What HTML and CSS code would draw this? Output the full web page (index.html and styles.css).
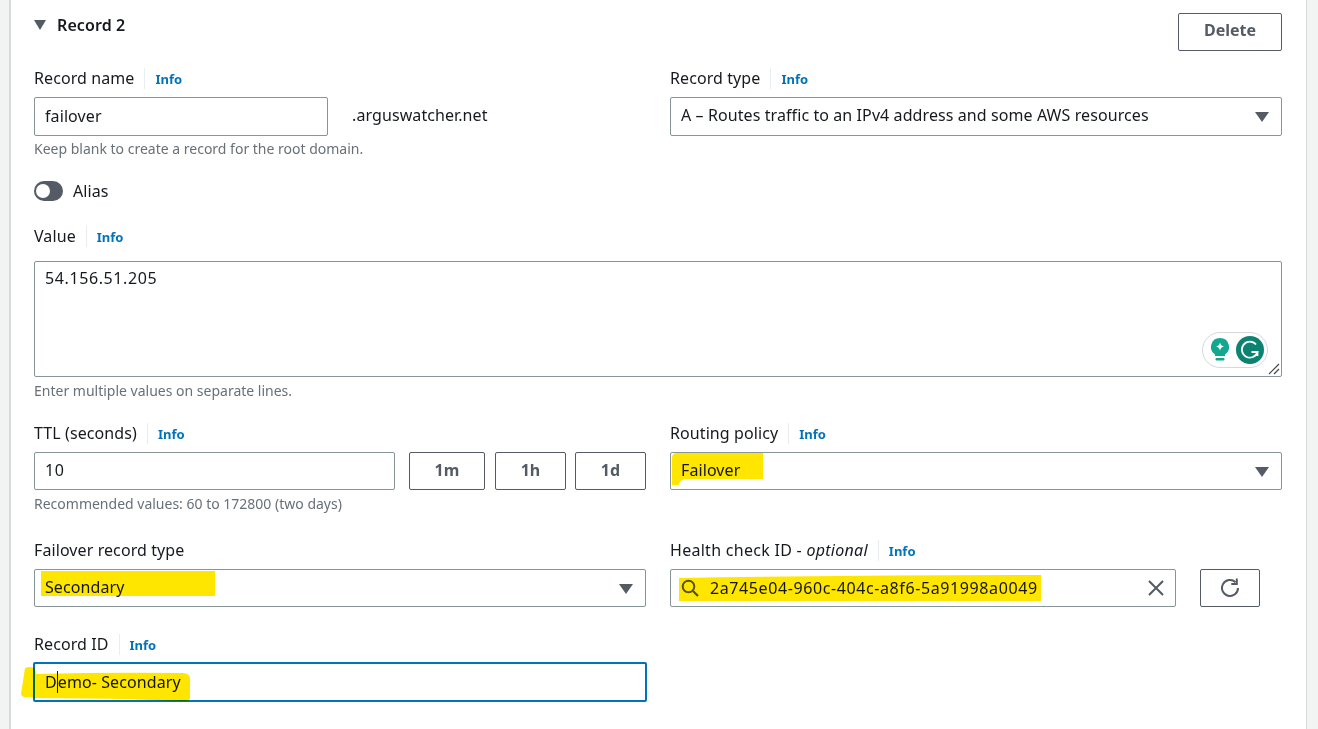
FILE: index.html
```html
<!DOCTYPE html>
<html lang="en">
<head>
<meta charset="utf-8">
<title>Record 2</title>
<link rel="stylesheet" href="styles.css">
</head>
<body>
<main class="card">
  <header class="head">
    <h2 class="title"><svg class="caret" viewBox="0 0 12 10"><path d="M0 0h12L6 10z"/></svg>Record 2</h2>
    <button class="btn delete">Delete</button>
  </header>

  <section class="row r-name">
    <div class="field">
      <div class="label">Record name<a class="info">Info</a></div>
      <div class="name-line">
        <div class="input name-input">failover</div>
        <span class="suffix">.arguswatcher.net</span>
      </div>
      <div class="hint">Keep blank to create a record for the root domain.</div>
    </div>
    <div class="field">
      <div class="label">Record type<a class="info">Info</a></div>
      <div class="input select">A – Routes traffic to an IPv4 address and some AWS resources<svg class="arrow" viewBox="0 0 14 10"><path d="M0 0h14L7 10z"/></svg></div>
    </div>
  </section>

  <div class="alias"><span class="toggle"><span class="knob"></span></span>Alias</div>

  <section class="value">
    <div class="label">Value<a class="info">Info</a></div>
    <div class="input area"><span class="num">54.156.51.205</span>
      <div class="gram">
        <svg class="bulb" viewBox="0 0 18 24"><path d="M9 0a9 9 0 0 1 5 16.500V18H4v-1.500A9 9 0 0 1 9 0z" fill="#12a88f"/><path d="M9 4.500c.6 2.400 1.600 3.400 4 4-2.400.6-3.400 1.600-4 4-.6-2.400-1.600-3.400-4-4 2.400-.6 3.400-1.600 4-4z" fill="#fff"/><rect x="4.500" y="20" width="9" height="2.500" rx="1" fill="#12a88f"/></svg>
        <svg class="g" viewBox="0 0 28 28"><circle cx="14" cy="14" r="14" fill="#0b8370"/><path d="M20 8.500A8 8 0 1 0 21.500 16H15.500M21.500 16v4" fill="none" stroke="#fff" stroke-width="1.800"/></svg>
      </div>
      <svg class="grip" viewBox="0 0 12 12"><path d="M1 11 11 1M6 11l5-5" stroke="#444" stroke-width="1.200"/></svg>
    </div>
    <div class="hint">Enter multiple values on separate lines.</div>
  </section>

  <section class="row r-ttl">
    <div class="field">
      <div class="label">TTL (seconds)<a class="info">Info</a></div>
      <div class="ttl-line">
        <div class="input ttl-input"><span class="num">10</span></div>
        <button class="btn unit u-m">1m</button>
        <button class="btn unit u-h">1h</button>
        <button class="btn unit u-d">1d</button>
      </div>
      <div class="hint">Recommended values: 60 to 172800 (two days)</div>
    </div>
    <div class="field">
      <div class="label">Routing policy<a class="info">Info</a></div>
      <div class="input select">Failover<svg class="arrow" viewBox="0 0 14 10"><path d="M0 0h14L7 10z"/></svg></div>
    </div>
  </section>

  <section class="row r-fail">
    <div class="field">
      <div class="label">Failover record type</div>
      <div class="input select">Secondary<svg class="arrow" viewBox="0 0 14 10"><path d="M0 0h14L7 10z"/></svg></div>
    </div>
    <div class="field">
      <div class="label health-label">Health check ID -&nbsp;<em>optional</em><a class="info">Info</a></div>
      <div class="health-line">
        <div class="input search">
          <svg class="mag" viewBox="0 0 18 18"><circle cx="7.500" cy="7.500" r="5.800" fill="none" stroke="#545b64" stroke-width="2"/><path d="M12 12l5 5" stroke="#545b64" stroke-width="2.200"/></svg>
          <span class="search-text num">2a745e04-960c-404c-a8f6-5a91998a0049</span>
          <svg class="clear" viewBox="0 0 16 16"><path d="M1 1l14 14M15 1 1 15" stroke="#545b64" stroke-width="2"/></svg>
        </div>
        <button class="btn refresh"><svg viewBox="0 0 20 20"><path d="M15.500 4.200A8 8 0 1 0 18 10" fill="none" stroke="#545b64" stroke-width="2"/><path d="M16.800 .5v5.500h-5.500" fill="none" stroke="#545b64" stroke-width="2"/></svg></button>
      </div>
    </div>
  </section>

  <section class="row r-id">
    <div class="field">
      <div class="label">Record ID<a class="info">Info</a></div>
      <div class="input focus"><span class="caret-text">D</span>emo- Secondary</div>
    </div>
  </section>
</main>

<svg class="marker" viewBox="0 0 1318 729" aria-hidden="true">
  <path d="M672 458q0-5 5-5h86v26h-78q-5 1-6 6h-7z"/>
  <rect x="41" y="571" width="174" height="25"/>
  <path d="M679 578q180-3 362-3v26H679z"/>
  <path d="M25 668q5-2 9 0 2 3 2 6 70-2 148-1 6 1 6 6v19q0 3-5 3-75-3-150-3l-7-1q-2 1-4 0-3-1-3-3z"/>
</svg>
</body>
</html>
```

FILE: styles.css
```css
* { box-sizing: border-box; }
html, body { margin: 0; height: 729px; overflow: hidden; }
body {
  position: relative;
  background: #f2f3f3;
  font-family: "Noto Sans", "Open Sans", sans-serif;
  font-size: 16px;
  line-height: 20px;
  letter-spacing: .09px;
  color: #16191f;
  padding: 0 11px 0 9px;
}
.card {
  height: 729px;
  background: #fff;
  border-left: 2px solid #d5dbdb;
  border-right: 1px solid #d5dbdb;
  padding: 13px 24px 0 23px;
}
.head { display: flex; justify-content: space-between; align-items: flex-start; height: 37px; }
.title { display: flex; align-items: center; margin: 2px 0 0; font-size: 16px; line-height: 20px; font-weight: 600; }
.caret { width: 12px; height: 10px; margin-right: 11px; fill: #545b64; }
.btn {
  font: 700 16px/20px "Noto Sans", "Open Sans", sans-serif;
  color: #545b64;
  background: #fff;
  border: 1px solid #545b64;
  border-radius: 2px;
  padding: 0;
}
.delete { width: 104px; height: 38px; padding-bottom: 4px; }
.row { display: grid; grid-template-columns: 612px 612px; column-gap: 24px; }
.r-name { margin-top: 18px; }
.label { display: flex; align-items: center; height: 20px; white-space: pre; margin-bottom: 9px; }
.health-label { letter-spacing: .28px; }
.info {
  color: #0073bb;
  font-size: 13px;
  font-weight: 700;
  margin-left: 10px;
  padding-left: 10px;
  padding-top: 1px;
  border-left: 1px solid #eaeded;
  line-height: 20px;
  letter-spacing: 0;
}
.input {
  position: relative;
  height: 39px;
  padding: 7px 10px;
  background: #fff;
  border: 1px solid #879596;
  border-radius: 2px;
  white-space: nowrap;
}
.num { letter-spacing: .6px; }
.select .arrow { position: absolute; right: 12px; top: 14px; width: 14px; height: 10px; fill: #545b64; }
.name-line { display: flex; align-items: center; }
.name-input { width: 294px; padding-top: 8px; }
.suffix { margin-left: 24px; margin-top: -4px; }
.hint { color: #687078; font-size: 14px; line-height: 18px; margin-top: 4px; letter-spacing: 0; }
.alias { display: flex; align-items: center; margin-top: 23px; height: 20px; }
.toggle { position: relative; width: 29px; height: 20px; border-radius: 10px; background: #545b64; margin-right: 10px; }
.knob { position: absolute; left: 2px; top: 3px; width: 14px; height: 14px; border-radius: 50%; background: #fff; }
.value { margin-top: 25px; margin-right: -1px; }
.value .label { margin-bottom: 15px; }
.area { height: 116px; width: 1248px; padding-top: 6px; }
.value .hint { margin-top: 5px; }
.gram {
  position: absolute;
  right: 13px;
  bottom: 8px;
  width: 66px;
  height: 36px;
  display: flex;
  align-items: center;
  gap: 7px;
  padding-left: 8px;
  border: 1px solid #d5d7e2;
  border-radius: 18px;
  background: #fff;
}
.bulb { width: 18px; height: 24px; }
.g { width: 28px; height: 28px; }
.grip { position: absolute; right: 1px; bottom: 1px; width: 12px; height: 12px; }
.r-ttl { margin-top: 23px; }
.r-ttl .input, .r-fail .input { height: 38px; }
.r-ttl .hint { margin-top: 5px; }
.ttl-line { display: flex; }
.ttl-input { width: 361px; }
.unit { height: 38px; padding-bottom: 2px; }
.u-m { width: 76px; margin-left: 14px; }
.u-h { width: 71px; margin-left: 10px; }
.u-d { width: 71px; margin-left: 9px; }
.r-fail { margin-top: 27px; }
.health-line { display: flex; }
.search { width: 506px; display: flex; align-items: center; padding: 0 10px; }
.mag { width: 18px; height: 18px; margin-right: 11px; }
.search-text { flex: 1; }
.clear { width: 16px; height: 16px; margin-right: 1px; }
.refresh { width: 60px; height: 38px; margin-left: 24px; display: flex; align-items: center; justify-content: center; }
.refresh svg { width: 20px; height: 20px; }
.r-id { margin-top: 27px; }
.r-id .label { margin-bottom: 8px; }
.focus { height: 40px; width: 614px; margin-left: -1px; border: 2px solid #0073bb; padding: 8px 10px 7px; line-height: 20px; }
.caret-text { border-right: 1px solid #16191f; }
.marker { position: absolute; left: 0; top: 0; width: 1318px; height: 729px; mix-blend-mode: multiply; pointer-events: none; fill: #ffe600; }
```
